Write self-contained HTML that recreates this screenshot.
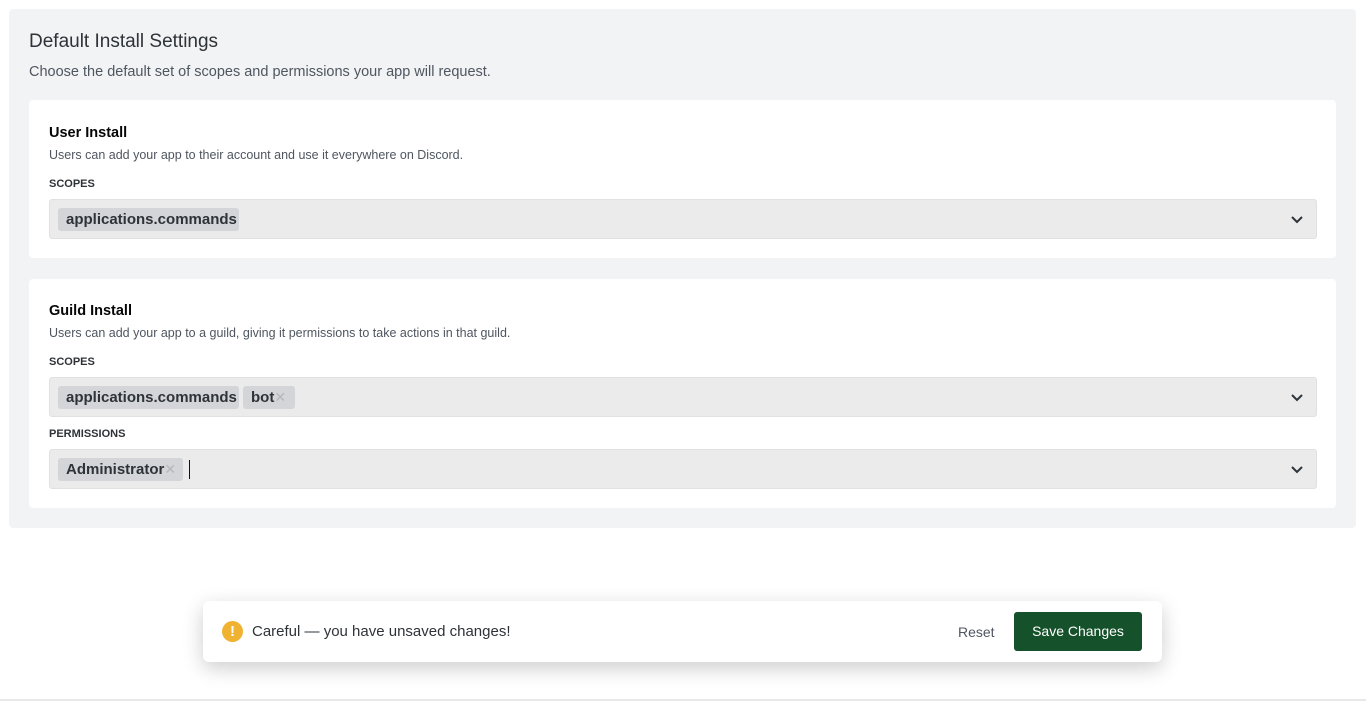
<!DOCTYPE html><html><head><style>
body{margin:0;width:1366px;height:701px;background:#fff;font-family:"Liberation Sans",sans-serif;position:relative;overflow:hidden;color:#2e3338}
.panel{position:absolute;left:9px;top:9px;width:1347px;height:519px;background:#f2f3f5;border-radius:4px}
h1{position:absolute;left:20px;top:22px;margin:0;font-size:19px;font-weight:400;color:#2e3338}
.sub{position:absolute;left:20px;top:55px;font-size:14.5px;color:#4f5660}
.card{position:absolute;left:20px;width:1307px;background:#fff;border-radius:4px}
.card h2{position:absolute;left:20px;margin:0;font-size:14.5px;font-weight:700;color:#060607}
.card .d{position:absolute;left:20px;font-size:12.5px;color:#4f5660}
.lbl{position:absolute;left:20px;font-size:11px;font-weight:700;color:#2e3338}
.sel{position:absolute;left:20px;width:1266px;height:38px;background:#ebebeb;border:1px solid #e0e1e3;border-radius:3px}
.chip{position:absolute;top:8px;height:23px;background:#d4d5d8;border-radius:3px;font-size:15px;font-weight:700;color:#2e3338;line-height:23px;padding:0 8px;box-sizing:border-box;white-space:nowrap;overflow:hidden}
.x{color:#b5b7ba;font-weight:400;font-size:14px}
.chev{position:absolute;right:12px;top:12px}
.toast{position:absolute;left:203px;top:601px;width:959px;height:61px;background:#fff;border-radius:6px;box-shadow:0 6px 20px rgba(0,0,0,.2)}
.warn{position:absolute;left:19px;top:20px;width:21px;height:21px;border-radius:50%;background:#f0b232;color:#fff;font-weight:700;font-size:15px;text-align:center;line-height:21px}
.tt{position:absolute;left:49px;top:22px;font-size:15px;color:#2e3338}
.reset{position:absolute;left:755px;top:23px;font-size:14px;color:#4f5660}
.btn{position:absolute;left:811px;top:11px;width:128px;height:39px;background:#15522b;border-radius:3px;color:#fff;font-size:14px;text-align:center;line-height:39px}
</style></head><body>
<div class="panel">
<h1>Default Install Settings</h1>
<div class="sub">Choose the default set of scopes and permissions your app will request.</div>
<div class="card" style="top:91px;height:158px">
<h2 style="top:25px">User Install</h2>
<div class="d" style="top:48px">Users can add your app to their account and use it everywhere on Discord.</div>
<div class="lbl" style="top:78px">SCOPES</div>
<div class="sel" style="top:99px"><div class="chip" style="left:8px;width:181px">applications.commands</div>
<svg class="chev" width="14" height="14" viewBox="0 0 14 14"><path d="M2 5l5 5 5-5" fill="none" stroke="#2e3338" stroke-width="2"/></svg></div>
</div>
<div class="card" style="top:270px;height:229px">
<h2 style="top:24px">Guild Install</h2>
<div class="d" style="top:47px">Users can add your app to a guild, giving it permissions to take actions in that guild.</div>
<div class="lbl" style="top:77px">SCOPES</div>
<div class="sel" style="top:98px"><div class="chip" style="left:8px;width:181px">applications.commands</div><div class="chip" style="left:193px;width:52px">bot<span class="x">✕</span></div>
<svg class="chev" width="14" height="14" viewBox="0 0 14 14"><path d="M2 5l5 5 5-5" fill="none" stroke="#2e3338" stroke-width="2"/></svg></div>
<div class="lbl" style="top:149px">PERMISSIONS</div>
<div class="sel" style="top:170px"><div class="chip" style="left:8px;width:125px">Administrator<span class="x">✕</span></div><div style="position:absolute;left:139px;top:10px;width:1px;height:19px;background:#111"></div>
<svg class="chev" width="14" height="14" viewBox="0 0 14 14"><path d="M2 5l5 5 5-5" fill="none" stroke="#2e3338" stroke-width="2"/></svg></div>
</div>
</div>
<div class="toast"><div class="warn">!</div><div class="tt">Careful — you have unsaved changes!</div><div class="reset">Reset</div><div class="btn">Save Changes</div></div>
<div style="position:absolute;left:0;top:699px;width:1366px;height:2px;background:#e8e8e8"></div>
</body></html>
